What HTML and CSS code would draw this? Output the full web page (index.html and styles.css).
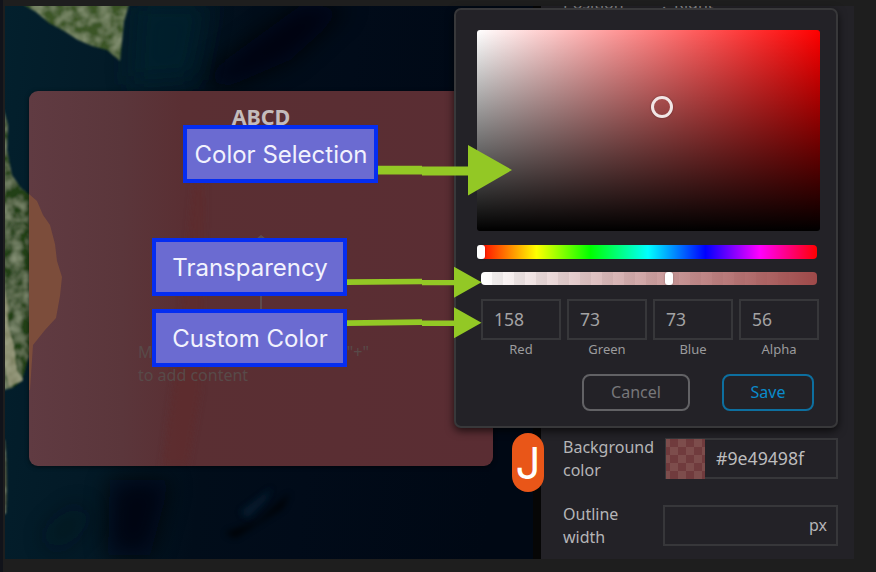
FILE: index.html
```html
<!DOCTYPE html>
<html lang="en">
<head>
<meta charset="utf-8">
<title>Background color</title>
<link rel="stylesheet" href="styles.css">
</head>
<body>
<main class="window">
  <section class="map">
    <svg class="terrain" viewBox="5 6 536 553" preserveAspectRatio="none" aria-hidden="true">
      <defs>
        <linearGradient id="sea" x1="0" x2="1" y1="0" y2=".12">
          <stop offset="0" stop-color="#03202d"/><stop offset=".27" stop-color="#031926"/><stop offset=".46" stop-color="#010d1a"/><stop offset=".65" stop-color="#010b19"/><stop offset="1" stop-color="#000814"/>
        </linearGradient>
        <filter id="soft" x="-60%" y="-60%" width="220%" height="220%"><feGaussianBlur stdDeviation="12"/></filter>
        <filter id="fine" x="-30%" y="-30%" width="160%" height="160%"><feGaussianBlur stdDeviation="3"/></filter>
        <filter id="ground" x="-10%" y="-10%" width="120%" height="120%">
          <feTurbulence type="fractalNoise" baseFrequency=".09" numOctaves="3" seed="4" result="n"/>
          <feColorMatrix in="n" values="0 0 0 0 .5  0 0 0 0 .56  0 0 0 0 .38  .9 0 0 0 -.32" result="c"/>
          <feComposite in="c" in2="SourceGraphic" operator="in" result="t"/>
          <feMerge result="m"><feMergeNode in="SourceGraphic"/><feMergeNode in="t"/></feMerge>
          <feGaussianBlur in="m" stdDeviation=".8"/>
        </filter>
      </defs>
      <rect x="5" y="6" width="536" height="553" fill="url(#sea)"/>
      <path d="M300 6L205 75L220 90L290 60L350 6z" fill="#00040e" opacity=".8" filter="url(#soft)"/>
      <path d="M110 480H170L150 555H108z" fill="#00060f" opacity=".75" filter="url(#soft)"/>
      <path d="M135 0H210L195 80L130 85z" fill="#03202e" opacity=".7" filter="url(#soft)"/>
      <path d="M45 535L80 505L85 520L55 550z" fill="#00121b" opacity=".6" filter="url(#soft)"/>
      <path d="M225 533L258 521L290 493L283 508L235 538z" fill="#000106" opacity=".8" filter="url(#fine)"/>
      <path d="M240 512L272 488L266 500L248 518z" fill="#092b42" opacity=".5" filter="url(#fine)"/>
      <g filter="url(#ground)">
        <path d="M22 4H129L124 22L122 42L120 61L114 56L107 50L92 46L78 40L64 31L49 23L36 12z" fill="#3a5428"/>
        <path d="M3 108L8 125L7 150L12 175L21 188L30 195L37 201L43 215L50 225L55 244L57 261L62 277L60 296L56 318L45 330L33 345L28 360L22 381L12 388L3 390z" fill="#213f16"/>
        <path d="M3 440H5Q8 475 6 513L3 515z" fill="#525840"/>
      </g>
      <path d="M3 285L8 305L8 325L14 345L17 370L23 380L9 387L3 360z" fill="#a09c80" opacity=".75" filter="url(#ground)"/>
    </svg>
    <article class="popup">
      <svg class="tint" viewBox="29 91 464 375" preserveAspectRatio="none" aria-hidden="true">
        <defs><linearGradient id="rose" x1="0" x2="1"><stop offset="0" stop-color="#603b42"/><stop offset=".2" stop-color="#5b363b"/><stop offset=".33" stop-color="#5a2f33"/><stop offset="1" stop-color="#5a2d33"/></linearGradient></defs>
        <rect x="29" y="91" width="464" height="375" fill="url(#rose)"/>
        <path d="M29 194L37 201L43 215L50 225L55 244L57 261L62 277L60 296L56 318L45 330L33 345L30 390L29 390z" fill="#7c4d3b"/>
        <path d="M193 185H205L201 390L188 466H162L178 350z" fill="#612a2b" opacity=".5" filter="url(#fine)"/>
      </svg>
      <h1>ABCD</h1>
      <svg class="drop-hint" viewBox="0 0 18 80" aria-hidden="true"><path d="M4 6L9 2L14 6z" fill="#5f514f"/><path d="M9 3V78" fill="none" stroke="#5f4b4c" stroke-width="2"/></svg>
      <div class="placeholder"><div class="hint"><span>M</span><span>"+"</span></div><div>to add content</div></div>
    </article>
  </section>

  <aside class="settings">
    <div class="columns"><span>Position</span><span>:</span><span>Right</span></div>
    <div class="setting background">
      <label>Background<br>color</label>
      <div class="field color-field"><i class="swatch"></i><span>#9e49498f</span></div>
    </div>
    <div class="setting outline">
      <label>Outline<br>width</label>
      <div class="field unit-field"><span>px</span></div>
    </div>
  </aside>

  <section class="dialog">
    <div class="spectrum"><i class="cursor"></i></div>
    <div class="hue"><i class="thumb"></i></div>
    <div class="alpha"><i class="thumb"></i></div>
    <div class="channels">
      <label><span class="value">158</span><span class="name">Red</span></label>
      <label><span class="value">73</span><span class="name">Green</span></label>
      <label><span class="value">73</span><span class="name">Blue</span></label>
      <label><span class="value">56</span><span class="name">Alpha</span></label>
    </div>
    <div class="actions"><button class="cancel">Cancel</button><button class="save">Save</button></div>
  </section>

  <svg class="arrows" viewBox="0 0 876 572" aria-hidden="true">
    <g fill="#93c825">
      <path d="M378 165.8H422V166.5H468V145L512 170L468 195.5V175.5H422V174.4H378z"/>
      <path d="M347 279.3L422 278.7V280H454V266.7L481.5 282.2L454 297.8V285.2H422V284.3L347 285z"/>
      <path d="M347 320.2L422 319.2V320.4H454V307.3L481.5 322.7L454 338.3V326H422V325L347 326z"/>
    </g>
  </svg>
  <div class="callout selection">Color Selection</div>
  <div class="callout transparency">Transparency</div>
  <div class="callout custom">Custom Color</div>
  <div class="marker">J</div>
</main>
</body>
</html>
```
FILE: styles.css
```css
* { box-sizing: border-box; }
body { margin: 0; background: #1e1e1e; font-family: "Noto Sans", sans-serif; color: #b5b5b7; }
.window { position: relative; width: 876px; height: 572px; padding: 6px 0 13px 2px; border-left: 3px solid #11131a; display: grid; grid-template-columns: 536px 313px; overflow: hidden; }

.map { position: relative; overflow: hidden; border-right: 8px solid #060606; }
.terrain { position: absolute; top: 0; left: 0; width: 536px; height: 553px; }
.popup { position: absolute; left: 24px; top: 85px; width: 464px; height: 375px; border-radius: 9px; overflow: hidden; box-shadow: 0 1px 4px #0008; }
.tint { position: absolute; width: 100%; height: 100%; }
.popup h1 { position: relative; margin: 11px 0 0; font-size: 21.5px; line-height: 29px; text-align: center; color: #c4bcbc; }
.drop-hint { position: absolute; left: 223px; top: 142px; width: 18px; height: 80px; }
.placeholder { position: absolute; left: 109px; top: 250px; width: 231px; font-size: 16px; line-height: 23px; color: #584a49; }
.hint { display: flex; justify-content: space-between; }

.settings { background: #232227; padding: 0 17px 0 22px; overflow: hidden; }
.columns { display: flex; height: 3px; overflow: hidden; font-size: 16px; line-height: 1; }
.columns span { margin-top: -11px; width: 60px; color: #8a8a8c; }
.columns span:nth-child(2) { width: 49px; padding-left: 37px; }
.columns span:nth-child(1) { width: 62px; }
.setting { display: flex; justify-content: space-between; font-size: 16px; line-height: 23px; }
.background { margin-top: 427px; }
.outline { margin-top: 21px; }
.field { height: 41px; border: 2px solid #37373a; margin-top: 2px; }
.background .field { width: 173px; display: flex; font-size: 17.7px; line-height: 36px; color: #bdbdbe; }
.outline .field { width: 175px; padding-right: 9px; text-align: right; line-height: 37px; }
.settings { padding-right: 16px; }
.swatch { flex: none; width: 39px; height: 40px; margin: -1px 11px 0 -1px; background: repeating-conic-gradient(#7d4d4c 0 25%, #703b3d 0 50%) 4px 0 / 16px 16px; }

.dialog { position: absolute; left: 451px; top: 8px; width: 384px; height: 420px; padding: 20px 17px 16px 21px; border: 2px solid #38383a; border-radius: 7px; background: #232227; box-shadow: 0 3px 9px #000a; }
.spectrum { position: relative; width: 343px; height: 201px; border-radius: 3px; background: linear-gradient(to top, #000, transparent), linear-gradient(to right, #fff, #f00); }
.cursor { position: absolute; left: 174px; top: 66px; width: 22px; height: 22px; border: 3px solid #f1e6e6; border-radius: 50%; box-shadow: 0 0 2px #0006; }
.hue { position: relative; width: 338px; height: 14px; margin: 14px 0 0 2px; border-radius: 4px; background: linear-gradient(to right, #f00, #ff0 17%, #0f0 33%, #0ff 50%, #00f 67%, #f0f 83%, #f00); }
.thumb { position: absolute; width: 8px; height: 14px; top: 0; border-radius: 3px; background: #fff; box-shadow: 0 0 2px #0005; }
.hue .thumb { left: -2px; }
.alpha { position: relative; width: 336px; height: 13px; margin: 13px 0 0 4px; border-radius: 4px; background: linear-gradient(to right, #fff0, #9e4949), repeating-linear-gradient(to right, #fff 0 11px, #f0f0f0 11px 22px); }
.alpha .thumb { left: 184px; height: 13px; }
.channels { display: flex; justify-content: space-between; width: 338px; margin: 14px 0 0 4px; }
.channels label { width: 80px; text-align: center; }
.value { display: block; height: 41px; border: 2px solid #37373a; padding-left: 11px; font-size: 17.5px; line-height: 36px; text-align: left; color: #a3a3a4; }
.name { display: block; font-size: 13px; line-height: 18px; color: #9b9b9d; }
.actions { display: flex; justify-content: flex-end; gap: 32px; margin: 16px 5px 0 0; }
.actions button { height: 37px; padding: 0 0 2px; border: 2px solid #626265; border-radius: 8px; background: transparent; color: #77777a; font: 16px "Noto Sans", sans-serif; }
.actions .cancel { width: 108px; }
.actions .save { width: 92px; border-color: #0d6f9f; color: #0a8bcb; }

.arrows { position: absolute; left: -3px; top: 0; width: 876px; height: 572px; }
.callout { position: absolute; width: 195px; height: 58px; border: 4px solid #052df1; background: #6b6bd1; color: #f2f2fd; font: 24px/51px Inter, sans-serif; text-align: center; white-space: nowrap; }
.selection { left: 180px; top: 125px; }
.transparency { left: 149px; top: 238px; }
.custom { left: 149px; top: 309px; }
.callout { text-indent: 1px; }
.marker { position: absolute; left: 509px; top: 433px; width: 32px; height: 59px; border-radius: 16px; background: #e95618; color: #fff; font: 44px/60px Inter, sans-serif; text-align: center; }
```
